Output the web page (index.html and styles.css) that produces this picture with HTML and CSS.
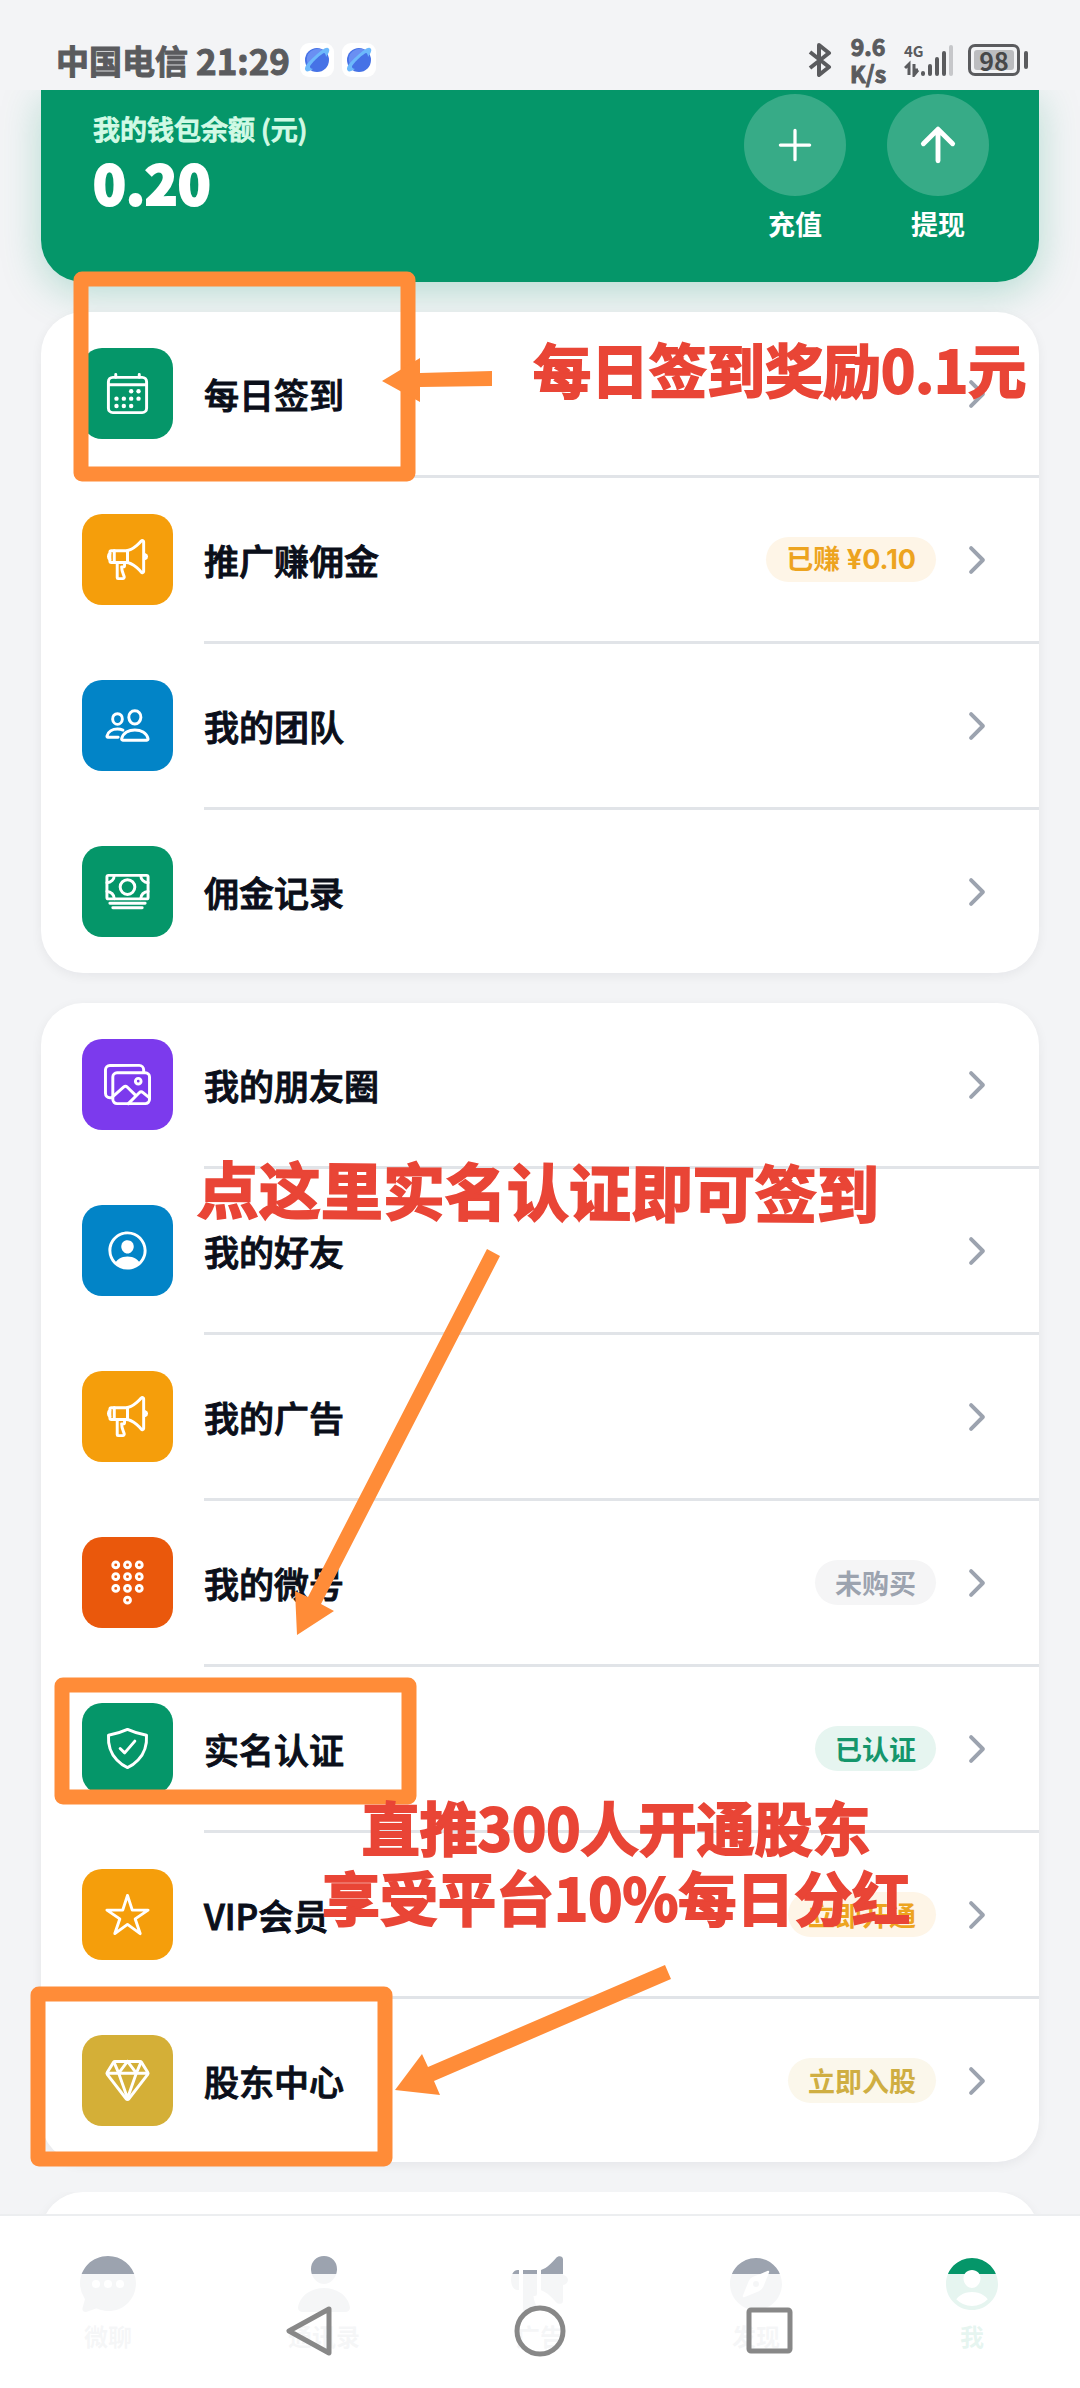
FILE: index.html
```html
<!DOCTYPE html>
<html lang="zh-CN">
<head>
<meta charset="utf-8">
<meta name="viewport" content="width=device-width, initial-scale=1">
<title>我的</title>
<link rel="stylesheet" href="styles.css">
</head>
<body>
<svg class="sprite" aria-hidden="true">
  <symbol id="calendar" viewBox="0 0 512 512">
    <rect x="48" y="80" width="416" height="384" rx="48"/>
    <g class="solid"><circle cx="296" cy="232" r="24"/><circle cx="376" cy="232" r="24"/><circle cx="136" cy="312" r="24"/><circle cx="216" cy="312" r="24"/><circle cx="296" cy="312" r="24"/><circle cx="376" cy="312" r="24"/><circle cx="136" cy="392" r="24"/><circle cx="216" cy="392" r="24"/><circle cx="296" cy="392" r="24"/></g>
    <path d="M128 48v32M384 48v32M464 160H48"/>
  </symbol>
  <symbol id="megaphone" viewBox="0 0 512 512">
    <path d="M407.94 52.22S321.3 160 240 160H80a16 16 0 00-16 16v96a16 16 0 0016 16h160c81.3 0 167.94 108.23 167.94 108.23 6.06 8 24.06 2.52 24.06-9.83V62c0-12.31-17-18.82-24.06-9.78z"/>
    <path d="M64 256s-16-6-16-32 16-32 16-32M448 246s16-4.33 16-22-16-22-16-22M256 160v128M112 160v128"/>
    <path d="M144 288v168a8 8 0 008 8h53a16 16 0 0015.29-20.73C211.91 416.39 192 386.08 192 336h16a16 16 0 0016-16v-16a16 16 0 00-16-16h-16"/>
  </symbol>
  <symbol id="people" viewBox="0 0 512 512">
    <path d="M402 168c-2.93 40.67-33.1 72-66 72s-63.12-31.32-66-72c-3-42.31 26.37-72 66-72s69 30.46 66 72z"/>
    <path d="M336 304c-65.17 0-127.84 32.37-143.54 95.41-2.08 8.34 3.15 16.59 11.72 16.59h263.65c8.57 0 13.77-8.25 11.72-16.59C463.85 335.36 401.18 304 336 304z"/>
    <path d="M200 185.94c-2.34 32.48-26.72 58.06-53 58.06s-50.7-25.57-53-58.06C91.61 152.15 115.34 128 147 128s55.39 24.77 53 57.94zM206 306c-18.05-8.27-37.93-11.45-59-11.45-52 0-102.1 25.85-114.65 76.2-1.65 6.66 2.53 13.25 9.37 13.25H154"/>
  </symbol>
  <symbol id="cash" viewBox="0 0 512 512">
    <rect x="32" y="80" width="448" height="256" rx="16"/>
    <path d="M64 384h384M96 432h320"/>
    <circle cx="256" cy="208" r="80"/>
    <path d="M480 160a80 80 0 01-80-80M32 160a80 80 0 0080-80M480 256a80 80 0 00-80 80M32 256a80 80 0 0180 80"/>
  </symbol>
  <symbol id="images" viewBox="0 0 512 512">
    <path d="M432 112V96a48.14 48.14 0 00-48-48H64a48.14 48.14 0 00-48 48v256a48.14 48.14 0 0048 48h16"/>
    <rect x="96" y="128" width="400" height="336" rx="46"/>
    <ellipse cx="372.92" cy="219.64" rx="30.77" ry="30.55"/>
    <path d="M342.15 372.17L255 285.78a30.93 30.93 0 00-42.18-1.21L96 387.64M265.23 464l118.59-117.73a31 31 0 0141.46-1.87L496 402.91"/>
  </symbol>
  <symbol id="person-circle" viewBox="0 0 512 512">
    <g class="solid"><path d="M258.9 48C141.92 46.42 46.42 141.92 48 258.9c1.56 112.19 92.91 203.54 205.1 205.1 117 1.6 212.48-93.9 210.88-210.88C462.44 140.91 371.09 49.56 258.9 48zm126.42 327.25a4 4 0 01-6.14-.32 124.27 124.27 0 00-32.35-29.59C321.37 329 289.11 320 256 320s-65.37 9-90.83 25.34a124.24 124.24 0 00-32.35 29.58 4 4 0 01-6.14.32A175.32 175.32 0 0180 259c-1.63-97.31 78.22-178.76 175.57-179S432 158.81 432 256a175.32 175.32 0 01-46.68 119.25z"/>
    <path d="M256 144c-19.72 0-37.55 7.39-50.22 20.82s-19 32-17.57 51.93C191.11 256 221.52 288 256 288s64.83-32 67.79-71.24c1.48-19.74-4.8-38.14-17.68-51.82C293.39 151.44 275.59 144 256 144z"/></g>
  </symbol>
  <symbol id="keypad" viewBox="0 0 512 512">
    <circle cx="128" cy="64" r="32"/><circle cx="256" cy="64" r="32"/><circle cx="384" cy="64" r="32"/>
    <circle cx="128" cy="192" r="32"/><circle cx="256" cy="192" r="32"/><circle cx="384" cy="192" r="32"/>
    <circle cx="128" cy="320" r="32"/><circle cx="256" cy="320" r="32"/><circle cx="384" cy="320" r="32"/>
    <circle cx="256" cy="448" r="32"/>
  </symbol>
  <symbol id="shield" viewBox="0 0 512 512">
    <path d="M336 176L225.2 304 176 255.8"/>
    <path d="M463.1 112.37C373.68 96.33 336.71 84.45 256 48c-80.71 36.45-117.68 48.33-207.1 64.37C32.7 369.13 240.58 457.79 256 464c15.42-6.21 223.3-94.87 207.1-351.63z"/>
  </symbol>
  <symbol id="star" viewBox="0 0 512 512">
    <path d="M480 208H308L256 48l-52 160H32l140 96-54 160 138-100 138 100-54-160z"/>
  </symbol>
  <symbol id="diamond" viewBox="0 0 512 512">
    <path d="M35.42 188.21l207.75 269.46a16.17 16.17 0 0025.66 0l207.75-269.46a16.52 16.52 0 00.95-18.75L407.06 55.71A16.22 16.22 0 00393.27 48H118.73a16.22 16.22 0 00-13.79 7.71L34.47 169.46a16.52 16.52 0 00.95 18.75zM48 176h416"/>
    <path d="M400 64l-48 112-96-128M112 64l48 112 96-128M256 448l-96-272M256 448l96-272"/>
  </symbol>
  <symbol id="chevron" viewBox="0 0 512 512"><path d="M184 112l144 144-144 144"/></symbol>
  <symbol id="planet" viewBox="0 0 34 34">
    <rect width="34" height="34" rx="9" fill="#fff"/>
    <circle cx="17" cy="17" r="12" fill="#4672e6"/>
    <path d="M8 11a12 12 0 0115-4L9 23a12 12 0 01-1-12z" fill="#6a8ff2"/>
    <path d="M6 28C3 25 7 20 15 13S27 3 29 6c1 2-1 5-3 8 0-2-1-4-2-4-3 1-14 11-14 14 0 1 2 2 3 2-3 2-6 3-7 2z" fill="#6db9fb"/>
  </symbol>
</svg>

<div class="phone">
  <header class="status">
    <div class="status-left">
      <span class="carrier">中国电信</span>
      <span class="clock">21:29</span>
      <svg class="app-dot"><use href="#planet"/></svg>
      <svg class="app-dot"><use href="#planet"/></svg>
    </div>
    <div class="status-right">
      <svg class="bluetooth" viewBox="0 0 24 34"><path d="M2 9l19 15-10 8V2l10 8L2 25"/></svg>
      <span class="speed">9.6<br>K/s</span>
      <div class="network">
        <span class="gen">4G</span>
        <svg class="bars" viewBox="0 0 50 34"><path d="M5 32V21l-4 4M10 21v11l4-5M10 27h4" class="data"/><path d="M19 30v1M26 23v8M33 16v15M40 10v21"/><path d="M47 4v27" class="dim"/></svg>
      </div>
      <div class="battery"><span>98</span></div>
    </div>
  </header>

  <main class="page">
    <section class="wallet">
      <div class="balance">
        <p class="balance-label">我的钱包余额 (元)</p>
        <p class="balance-value">0.20</p>
      </div>
      <div class="wallet-actions">
        <button type="button" class="action"><span class="action-disc"><svg viewBox="0 0 512 512"><path d="M256 112v288M400 256H112"/></svg></span>充值</button>
        <button type="button" class="action"><span class="action-disc"><svg class="bold" viewBox="0 0 512 512"><path d="M112 244l144-144 144 144M256 120v292"/></svg></span>提现</button>
      </div>
    </section>

    <nav class="card">
      <a class="row" href="#checkin"><span class="tile green"><svg><use href="#calendar"/></svg></span><span class="row-body"><span class="title">每日签到</span><svg class="chevron"><use href="#chevron"/></svg></span></a>
      <a class="row" href="#promote"><span class="tile amber"><svg><use href="#megaphone"/></svg></span><span class="row-body"><span class="title">推广赚佣金</span><span class="badge badge-amber badge-sum">已赚 ¥0.10</span><svg class="chevron"><use href="#chevron"/></svg></span></a>
      <a class="row" href="#team"><span class="tile blue"><svg><use href="#people"/></svg></span><span class="row-body"><span class="title">我的团队</span><svg class="chevron"><use href="#chevron"/></svg></span></a>
      <a class="row" href="#commission"><span class="tile green"><svg><use href="#cash"/></svg></span><span class="row-body"><span class="title">佣金记录</span><svg class="chevron"><use href="#chevron"/></svg></span></a>
    </nav>

    <nav class="card">
      <a class="row" href="#moments"><span class="tile violet"><svg><use href="#images"/></svg></span><span class="row-body"><span class="title">我的朋友圈</span><svg class="chevron"><use href="#chevron"/></svg></span></a>
      <a class="row" href="#friends"><span class="tile blue"><svg><use href="#person-circle"/></svg></span><span class="row-body"><span class="title">我的好友</span><svg class="chevron"><use href="#chevron"/></svg></span></a>
      <a class="row" href="#ads"><span class="tile amber"><svg><use href="#megaphone"/></svg></span><span class="row-body"><span class="title">我的广告</span><svg class="chevron"><use href="#chevron"/></svg></span></a>
      <a class="row" href="#number"><span class="tile orange"><svg><use href="#keypad"/></svg></span><span class="row-body"><span class="title">我的微号</span><span class="badge badge-gray">未购买</span><svg class="chevron"><use href="#chevron"/></svg></span></a>
      <a class="row" href="#verify"><span class="tile green"><svg><use href="#shield"/></svg></span><span class="row-body"><span class="title">实名认证</span><span class="badge badge-green">已认证</span><svg class="chevron"><use href="#chevron"/></svg></span></a>
      <a class="row" href="#vip"><span class="tile amber"><svg><use href="#star"/></svg></span><span class="row-body"><span class="title">VIP会员</span><span class="badge badge-amber">立即开通</span><svg class="chevron"><use href="#chevron"/></svg></span></a>
      <a class="row" href="#shareholder"><span class="tile gold"><svg><use href="#diamond"/></svg></span><span class="row-body"><span class="title">股东中心</span><span class="badge badge-gold">立即入股</span><svg class="chevron"><use href="#chevron"/></svg></span></a>
    </nav>

    <div class="peek"><div class="card"></div></div>
  </main>

  <footer class="bottom">
    <nav class="tabs">
      <a class="tab" href="#chat"><svg viewBox="0 0 512 512"><path d="M398 81.84A227.4 227.4 0 00255.82 32C194.9 32 138 55.47 95.46 98.09 54.35 139.33 31.82 193.78 32 251.37a215.66 215.66 0 0035.65 118.76l.19.27c.28.41.57.82.86 1.22s.65.92.73 1.05l.22.4c1.13 2 2 4.44 1.23 6.9l-18.42 66.66a29.13 29.13 0 00-1.2 7.63A25.69 25.69 0 0076.83 480a29.44 29.44 0 0010.45-2.29l67.49-24.36.85-.33a14.75 14.75 0 015.84-1.15 15.12 15.12 0 015.37 1c1.62.63 16.33 6.26 31.85 10.6 12.9 3.6 39.74 9 60.77 9 59.65 0 115.35-23.1 156.83-65.06C457.36 365.77 480 310.42 480 251.49a213.5 213.5 0 00-4.78-45c-10.34-48.62-37.76-92.9-77.22-124.65zM160 288a32 32 0 1132-32 32 32 0 01-32 32zm96 0a32 32 0 1132-32 32 32 0 01-32 32zm96 0a32 32 0 1132-32 32 32 0 01-32 32z"/></svg>微聊</a>
      <a class="tab" href="#contacts"><svg viewBox="0 0 512 512"><path d="M332.64 64.58C313.18 43.57 286 32 256 32c-30.16 0-57.43 11.5-76.8 32.38-19.58 21.11-29.12 49.8-26.88 80.78C156.76 206.28 203.27 256 256 256s99.16-49.71 103.67-110.82c2.27-30.7-7.33-59.33-27.03-80.6zM432 480H80a31 31 0 01-24.2-11.13c-6.5-7.77-9.12-18.38-7.18-29.11C57.06 392.94 83.4 353.61 124.8 326c36.78-24.51 83.37-38 131.2-38s94.42 13.5 131.2 38c41.4 27.6 67.74 66.93 76.18 113.75 1.94 10.73-.68 21.34-7.18 29.11A31 31 0 01432 480z"/></svg>通讯录</a>
      <a class="tab" href="#board"><svg viewBox="0 0 512 512"><path d="M88 144H76c-30 0-52 36-52 80s22 80 52 80h12zM120 144h112v192a16 16 0 01-16 16h-12c4 40 18 68 30 92a24 24 0 01-22 36h-68a24 24 0 01-24-24zM264 143c50-16 92-62 122-98 12-16 54-20 54 14v330c0 34-40 30-54 14-30-36-72-82-122-98zM440 184c24 4 40 18 40 40s-16 36-40 40z"/></svg>广告</a>
      <a class="tab" href="#discover"><svg viewBox="0 0 512 512"><circle cx="256" cy="256" r="24"/><path d="M256 48C141.13 48 48 141.13 48 256s93.13 208 208 208 208-93.13 208-208S370.87 48 256 48zm105.07 113.33l-46.88 117.2a64 64 0 01-35.66 35.66l-117.2 46.88a8 8 0 01-10.4-10.4l46.88-117.2a64 64 0 0135.66-35.66l117.2-46.88a8 8 0 0110.4 10.4z"/></svg>发现</a>
      <a class="tab current" href="#me"><svg viewBox="0 0 512 512"><path d="M256 48C141.31 48 48 141.31 48 256s93.31 208 208 208 208-93.31 208-208S370.69 48 256 48zm-50.22 116.82C218.45 151.39 236.28 144 256 144s37.39 7.44 50.11 20.94c12.89 13.68 19.16 32.06 17.68 51.82C320.83 256 290.43 288 256 288s-64.89-32-67.79-71.25c-1.47-19.92 4.79-38.36 17.57-51.93zM256 432a175.49 175.49 0 01-126-53.22 122.91 122.91 0 0135.14-33.44C190.63 329 222.89 320 256 320s65.37 9 90.83 25.34A122.87 122.87 0 01382 378.78 175.45 175.45 0 01256 432z"/></svg>我</a>
    </nav>
    <div class="system-keys">
      <button type="button" aria-label="返回"><svg viewBox="0 0 56 56"><path d="M47 6L7 28l40 22z"/></svg></button>
      <button type="button" aria-label="主页"><svg viewBox="0 0 56 56"><circle cx="28" cy="28" r="23"/></svg></button>
      <button type="button" aria-label="最近任务"><svg viewBox="0 0 56 56"><rect x="7" y="7" width="41" height="41" rx="2"/></svg></button>
    </div>
  </footer>

  <div class="notes">
    <svg class="marks" width="1080" height="2388" viewBox="0 0 1080 2388">
      <g class="frames"><rect x="81" y="279" width="327" height="195" rx="1"/><rect x="62" y="1685" width="347" height="112" rx="1"/><rect x="38" y="1994" width="347" height="165" rx="1"/></g>
      <g class="arrows"><path d="M382 381l38-23v15l72-2v15l-72 1v15z"/><path d="M297 1635l-2-44 13 6 179-348 13 7-179 348 13 7z"/><path d="M395 2090l27-36 6 13 237-102 6 14-237 102 6 14z"/></g>
    </svg>
    <p class="note note-checkin">每日签到奖励0.1元</p>
    <p class="note note-verify">点这里实名认证即可签到</p>
    <p class="note note-share">直推300人开通股东<br>享受平台10%每日分红</p>
  </div>
</div>
</body>
</html>
```
FILE: styles.css
```css
* { box-sizing: border-box; }

body {
  margin: 0;
  background: #f3f4f6;
  color: #0b0f1a;
  font-family: "Noto Sans CJK SC", "Noto Sans", sans-serif;
}

p { margin: 0; }
a { color: inherit; text-decoration: none; }

button {
  padding: 0;
  border: 0;
  background: none;
  color: inherit;
  font: inherit;
}

svg { display: block; flex: none; }
.sprite { position: absolute; width: 0; height: 0; }
.solid { fill: currentColor; stroke: none; }

.phone {
  position: relative;
  display: flex;
  flex-direction: column;
  min-height: 100vh;
}

/* Status bar */
.status {
  display: flex;
  justify-content: space-between;
  align-items: center;
  height: 90px;
  padding: 30px 52px 0 56px;
  color: #5a5b5e;
  font-weight: 700;
}

.status-left, .status-right { display: flex; align-items: center; }
.carrier { font-size: 33px; line-height: 40px; -webkit-text-stroke: 1px; }
.clock { margin: 0 10px 0 8px; font-size: 35px; line-height: 40px; -webkit-text-stroke: 1px; }
.app-dot { width: 34px; height: 34px; margin-right: 8px; }
.status-right { gap: 14px; }

.bluetooth {
  width: 24px;
  height: 34px;
  fill: none;
  stroke: currentColor;
  stroke-width: 4;
  stroke-linejoin: round;
}

.speed { width: 44px; font-size: 23px; line-height: 27px; text-align: center; -webkit-text-stroke: 1px; }
.network { position: relative; }
.gen { position: absolute; top: 0; left: 0; font-size: 15px; line-height: 16px; }

.bars {
  width: 50px;
  height: 34px;
  fill: none;
  stroke: currentColor;
  stroke-width: 4;
  stroke-linecap: round;
}
.bars .data { stroke-width: 3; stroke-linecap: butt; }
.bars .dim { stroke: #c6c7ca; }

.battery {
  position: relative;
  width: 52px;
  height: 32px;
  margin-right: 8px;
  padding: 3px;
  border: 3px solid currentColor;
  border-radius: 7px;
}
.battery span {
  display: block;
  border-radius: 3px;
  background: #bcbdc0;
  color: #47484a;
  font-size: 25px;
  line-height: 20px;
  text-align: center;
}
.battery::after {
  content: "";
  position: absolute;
  top: 4px;
  right: -11px;
  width: 4px;
  height: 18px;
  border-radius: 2px;
  background: currentColor;
}

/* Page */
.page {
  display: flex;
  flex-direction: column;
  gap: 30px;
  padding: 0 41px;
  overflow: hidden;
}

.wallet {
  display: flex;
  justify-content: space-between;
  padding: 4px 50px 38px 52px;
  border-radius: 0 0 42px 42px;
  background: #059669;
  box-shadow: 0 10px 40px rgba(5, 150, 105, 0.26);
  color: #fff;
}

.balance { padding-top: 16px; }
.balance-label {
  color: #d1fae5;
  font-size: 27px;
  font-weight: 500;
  line-height: 38px;
  -webkit-text-stroke: 1px;
}
.balance-value { font-size: 54px; font-weight: 900; line-height: 68px; -webkit-text-stroke: 2px; }

.wallet-actions { display: flex; gap: 41px; }
.action {
  display: flex;
  flex-direction: column;
  align-items: center;
  gap: 8px;
  font-size: 27px;
  font-weight: 700;
  line-height: 40px;
}
.action-disc {
  display: grid;
  place-items: center;
  width: 102px;
  height: 102px;
  border-radius: 50%;
  background: rgba(255, 255, 255, 0.2);
}
.action svg {
  width: 52px;
  height: 52px;
  fill: none;
  stroke: currentColor;
  stroke-width: 32;
  stroke-linecap: round;
  stroke-linejoin: round;
}
.action .bold { stroke-width: 48; }

.card {
  border-radius: 42px;
  background: #fff;
  box-shadow: 0 3px 12px rgba(15, 23, 42, 0.06);
}

.row { display: flex; align-items: flex-start; gap: 31px; padding-left: 41px; }
.row-body {
  display: flex;
  flex: 1;
  align-items: center;
  gap: 20px;
  min-height: 163px;
  padding-right: 41px;
}
.row:not(:last-child) .row-body { min-height: 166px; border-bottom: 3px solid #e1e4e8; }

.tile {
  display: grid;
  place-items: center;
  width: 91px;
  height: 91px;
  margin-top: 36px;
  border-radius: 20px;
  color: #fff;
}
.tile svg {
  width: 47px;
  height: 47px;
  fill: none;
  stroke: currentColor;
  stroke-width: 32;
  stroke-linecap: round;
  stroke-linejoin: round;
}
.green { background: #059669; }
.amber { background: #f59e0b; }
.blue { background: #0284c7; }
.violet { background: #7c3aed; }
.orange { background: #ea580c; }
.gold { background: #d4af37; }

.title { flex: 1; font-size: 35px; font-weight: 500; line-height: 48px; -webkit-text-stroke: 1px; }

.badge {
  padding: 0 20px;
  border-radius: 23px;
  font-size: 27px;
  font-weight: 700;
  line-height: 45px;
}
.badge-sum { font-family: Inter, "Noto Sans CJK SC", sans-serif; }
.badge-amber { background: #fef5e7; color: #eda41f; }
.badge-gray { background: #f5f5f6; color: #9ca3af; }
.badge-green { background: #e6f5f0; color: #15966c; }
.badge-gold { background: #fbf7eb; color: #cfae42; }

.chevron {
  width: 42px;
  height: 42px;
  fill: none;
  stroke: #9ca3af;
  stroke-width: 48;
  stroke-linecap: round;
  stroke-linejoin: round;
}

.peek { height: 22px; margin: 0 -41px; padding: 0 41px; overflow: hidden; }
.peek .card { height: 120px; }

/* Tab bar with the translucent system keys over it */
.bottom {
  position: relative;
  flex: 1;
  min-height: 174px;
  border-top: 2px solid #eceef0;
  background: #fff;
}
.tabs { display: grid; grid-template-columns: repeat(5, 1fr); padding-top: 36px; }
.tab {
  display: flex;
  flex-direction: column;
  align-items: center;
  gap: 4px;
  color: #9ca3af;
  font-size: 24px;
  font-weight: 700;
  line-height: 32px;
}
.tab svg { width: 64px; height: 64px; fill: currentColor; }
.tab.current { color: #059669; }

.system-keys {
  position: absolute;
  inset: 58px 0 0;
  display: flex;
  justify-content: center;
  gap: 174px;
  background: rgba(255, 255, 255, 0.9);
}
.system-keys svg {
  width: 56px;
  height: 56px;
  fill: none;
  stroke: #888;
  stroke-width: 5;
  stroke-linejoin: round;
}

/* Hand-placed notes over the page */
.notes { position: absolute; inset: 0; overflow: hidden; pointer-events: none; }
.marks { position: absolute; top: 0; left: 0; }
.frames { fill: none; stroke: #ff8c38; stroke-width: 15; stroke-linejoin: round; }
.arrows { fill: #ff8c38; }

.note {
  position: absolute;
  color: #e94536;
  font-size: 58px;
  font-weight: 700;
  line-height: 70px;
  text-align: center;
  white-space: nowrap;
  -webkit-text-stroke: 2px;
}
.note-checkin { top: 333px; left: 533px; }
.note-verify { top: 1154px; left: 197px; font-size: 62px; transform: rotate(0.4deg); }
.note-share { top: 1791px; left: 322px; }
```
